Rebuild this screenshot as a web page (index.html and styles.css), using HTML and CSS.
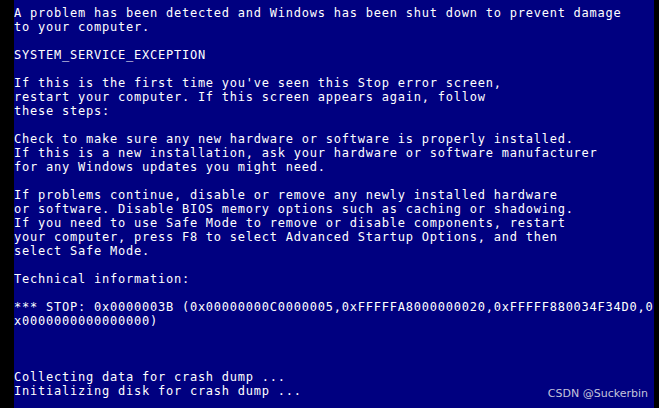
FILE: index.html
```html
<!DOCTYPE html>
<html lang="en">

<head>
    <meta charset="UTF-8">
    <meta name="viewport" content="width=device-width, initial-scale=1.0">
    <title>Stop error</title>
    <link rel="stylesheet" href="styles.css">
</head>

<body>
    <div class="screen">
        <p>A problem has been detected and Windows has been shut down to prevent damage<br>to your computer.</p>

        <p>SYSTEM_SERVICE_EXCEPTION</p>

        <p>If this is the first time you've seen this Stop error screen,<br>restart your computer. If this screen appears again, follow<br>these steps:</p>

        <p>Check to make sure any new hardware or software is properly installed.<br>If this is a new installation, ask your hardware or software manufacturer<br>for any Windows updates you might need.</p>

        <p>If problems continue, disable or remove any newly installed hardware<br>or software. Disable BIOS memory options such as caching or shadowing.<br>If you need to use Safe Mode to remove or disable components, restart<br>your computer, press F8 to select Advanced Startup Options, and then<br>select Safe Mode.</p>

        <p>Technical information:</p>

        <p class="stop">*** STOP: 0x0000003B (0x00000000C0000005,0xFFFFFA8000000020,0xFFFFF880034F34D0,0x0000000000000000)</p>

        <p>Collecting data for crash dump ...<br>Initializing disk for crash dump ...</p>

        <span class="mark">CSDN @Suckerbin</span>
    </div>
</body>

</html>
```

FILE: styles.css
```css
html,
body {
    margin: 0;
    padding: 0;
    background: #000;
}

.screen {
    position: relative;
    box-sizing: border-box;
    width: 640px;
    height: 408px;
    margin-left: 14px;
    padding-top: 6px;
    background: #000080;
    color: #fff;
    font-family: "DejaVu Sans Mono", monospace;
    font-size: 12px;
    letter-spacing: 0.77px;
    line-height: 14px;
    overflow: hidden;
}

.screen p {
    margin: 0 0 14px 0;
    white-space: nowrap;
}

/* the long stop code runs off the edge and wraps anywhere */
.screen p.stop {
    white-space: normal;
    word-break: break-all;
    margin-bottom: 42px;
}

.mark {
    position: absolute;
    right: 6px;
    bottom: 8px;
    font-family: "DejaVu Sans", sans-serif;
    font-size: 11px;
    letter-spacing: 0;
    line-height: 12px;
    color: #c4c4dc;
}
```
